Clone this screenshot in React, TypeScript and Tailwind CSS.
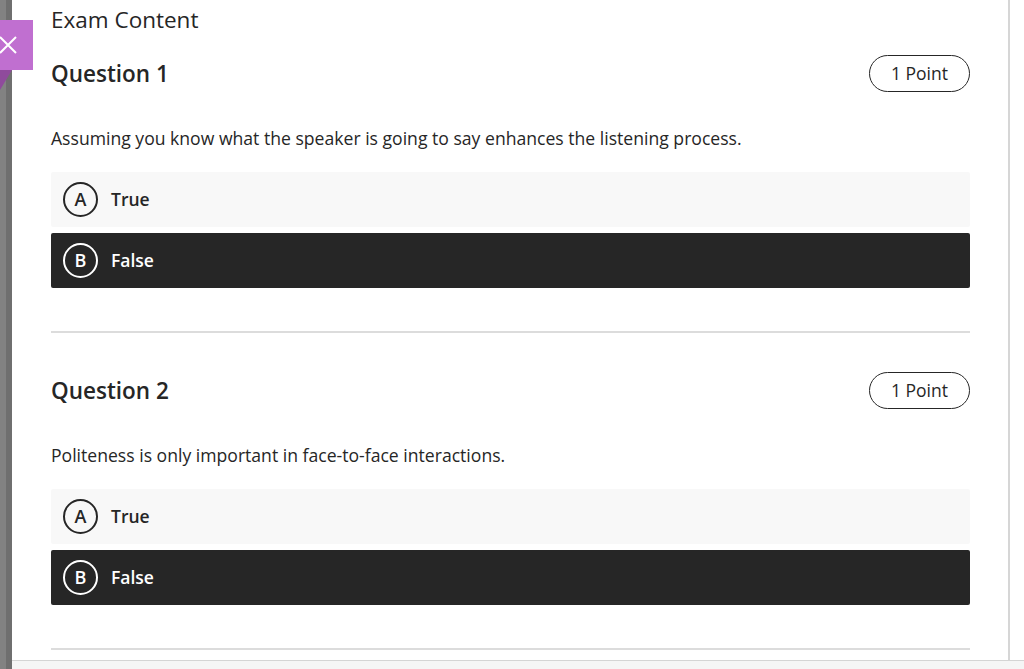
import React from "react";

function Option({ letter, label, selected }: { letter: string; label: string; selected?: boolean }) {
  return (
    <div
      className={
        "flex items-center h-[55px] pl-[12px] rounded-[2px] " +
        (selected ? "bg-[#262626] text-white" : "bg-[#f8f8f8] text-[#262626]")
      }
    >
      <div
        className={
          "w-[35px] h-[35px] rounded-full border-2 flex items-center justify-center text-[18px] font-semibold " +
          (selected ? "border-white" : "border-[#262626]")
        }
      >
        {letter}
      </div>
      <span className="ml-[13px] text-[17.5px] font-semibold">{label}</span>
    </div>
  );
}

function Question({ n, text }: { n: number; text: string }) {
  return (
    <div>
      <div className="flex items-center justify-between h-[37px]">
        <h2 className="text-[22.5px] font-semibold text-[#262626]">Question {n}</h2>
        <div className="h-[37px] px-[21px] rounded-full border border-[#262626] flex items-center text-[17.5px] font-medium text-[#262626]">
          1 Point
        </div>
      </div>
      <p className="mt-[34px] text-[17.6px] leading-[24px] text-[#262626]">{text}</p>
      <div className="mt-[22px] flex flex-col gap-[6px]">
        <Option letter="A" label="True" />
        <Option letter="B" label="False" selected />
      </div>
    </div>
  );
}

export default function App() {
  return (
    <div
      className="w-[1024px] h-[669px] overflow-hidden relative bg-[#f5f5f5] flex"
      style={{ fontFamily: '"Open Sans", "Noto Sans", sans-serif' }}
    >
      <div className="w-[12px] h-full flex shrink-0">
        <div className="w-[6px] h-full bg-[#828282]" />
        <div className="w-[6px] h-full bg-[#6f6f6f]" />
      </div>
      <div className="flex-1 flex flex-col">
        <div className="h-[661px] flex border-b border-[#d4d4d4]">
          <div className="w-[998px] bg-white border-r-2 border-[#d6d6d6] pl-[39px] pr-[38px]">
            <div className="text-[22.5px] leading-[40px] text-[#262626]">Exam Content</div>
            <div className="mt-[15px]">
              <Question n={1} text="Assuming you know what the speaker is going to say enhances the listening process." />
              <div className="mt-[43px] h-[2px] bg-[#dcdcdc]" />
              <div className="mt-[39px]">
                <Question n={2} text="Politeness is only important in face-to-face interactions." />
              </div>
              <div className="mt-[43px] h-[2px] bg-[#dcdcdc]" />
            </div>
          </div>
          <div className="flex-1 bg-white" />
        </div>
        <div className="flex-1 bg-[#f5f5f5]" />
      </div>
      {/* purple close tab */}
      <div className="absolute left-0 top-[20px] w-[33px] h-[50px] bg-[#c06fd0] flex items-center justify-start">
        <svg width="20" height="20" viewBox="0 0 20 20" className="ml-[-2px]">
          <path d="M2 2 L18 18 M18 2 L2 18" stroke="white" strokeWidth="2" />
        </svg>
      </div>
      <div className="absolute left-0 top-[70px] w-0 h-0 border-t-[20px] border-t-[#8f4b9c] border-r-[12px] border-r-transparent" />
    </div>
  );
}
